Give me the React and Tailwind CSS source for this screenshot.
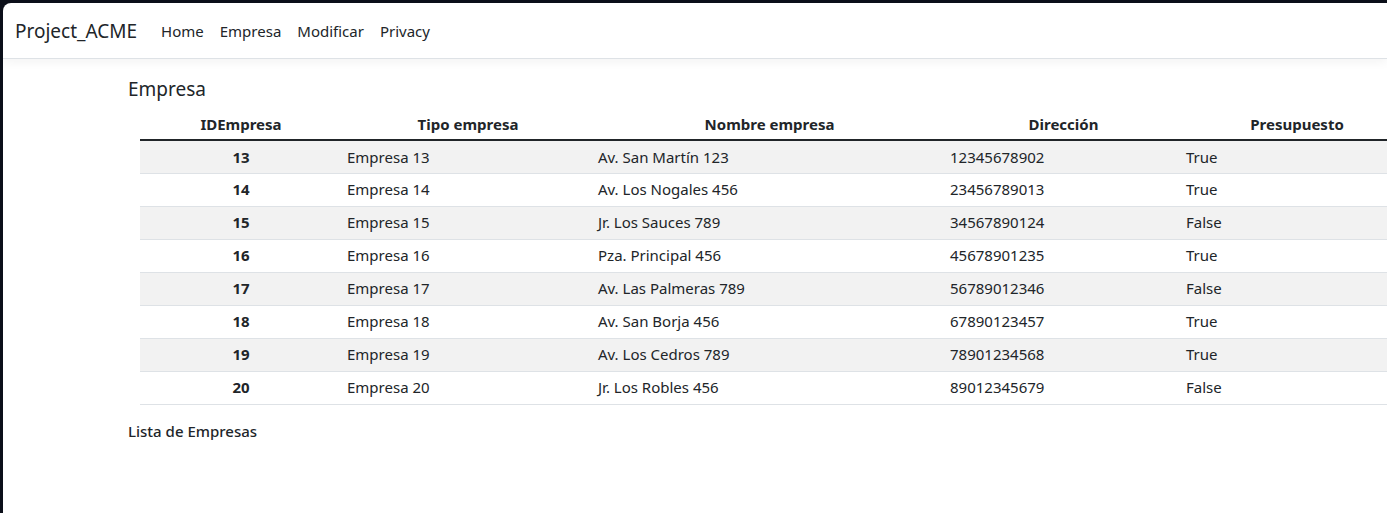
import React from 'react';

const empresas = [
  { id: 13, tipo: 'Empresa 13', nombre: 'Av. San Martín 123', direccion: '12345678902', presupuesto: 'True' },
  { id: 14, tipo: 'Empresa 14', nombre: 'Av. Los Nogales 456', direccion: '23456789013', presupuesto: 'True' },
  { id: 15, tipo: 'Empresa 15', nombre: 'Jr. Los Sauces 789', direccion: '34567890124', presupuesto: 'False' },
  { id: 16, tipo: 'Empresa 16', nombre: 'Pza. Principal 456', direccion: '45678901235', presupuesto: 'True' },
  { id: 17, tipo: 'Empresa 17', nombre: 'Av. Las Palmeras 789', direccion: '56789012346', presupuesto: 'False' },
  { id: 18, tipo: 'Empresa 18', nombre: 'Av. San Borja 456', direccion: '67890123457', presupuesto: 'True' },
  { id: 19, tipo: 'Empresa 19', nombre: 'Av. Los Cedros 789', direccion: '78901234568', presupuesto: 'True' },
  { id: 20, tipo: 'Empresa 20', nombre: 'Jr. Los Robles 456', direccion: '89012345679', presupuesto: 'False' },
];

const App = () => {
  return (
    <div className="h-[513px] bg-[#0b0f19] pt-[3px] pl-[3px] overflow-hidden font-['Noto_Sans',sans-serif] text-[#212529]">
      <div className="h-full bg-white rounded-tl-[8px] overflow-hidden">
        <nav className="h-[56px] flex items-center px-3 pt-[2px] border-b border-[#dee2e6] shadow-[0_3px_10px_rgba(0,0,0,0.05)]">
          <span className="text-[19px] mr-4">Project_ACME</span>
          <ul className="flex text-[15px]">
            <li className="px-2">Home</li>
            <li className="px-2">Empresa</li>
            <li className="px-2">Modificar</li>
            <li className="px-2">Privacy</li>
          </ul>
        </nav>

        <main className="pl-[125px] pt-[18px]">
          <h5 className="text-[19px] leading-[24px] mb-[9px]">Empresa</h5>
          <div className="pl-[12px]">
            <table className="table-fixed w-[1270px] border-collapse text-[15px]">
              <thead>
                <tr className="border-b-2 border-[#212529]">
                  <th className="w-[200px] text-center font-bold h-[30px] pl-[2px]">IDEmpresa</th>
                  <th className="w-[250px] text-center font-bold pl-[6px]">Tipo empresa</th>
                  <th className="w-[352px] text-center font-bold pl-[7px]">Nombre empresa</th>
                  <th className="w-[236px] text-center font-bold pl-[7px]">Dirección</th>
                  <th className="w-[232px] text-center font-bold pl-[6px]">Presupuesto</th>
                </tr>
              </thead>
              <tbody>
                {empresas.map((e, i) => (
                  <tr key={e.id} className={`border-b border-[#dee2e6] h-[33px] ${i % 2 === 0 ? 'bg-[#f2f2f2]' : 'bg-white'}`}>
                    <th className="text-center font-bold pl-[2px]">{e.id}</th>
                    <td className="px-2 pl-[7px]">{e.tipo}</td>
                    <td className="px-2">{e.nombre}</td>
                    <td className="px-2">{e.direccion}</td>
                    <td className="px-2">{e.presupuesto}</td>
                  </tr>
                ))}
              </tbody>
            </table>
          </div>
          <p className="mt-[15px] text-[15px] font-medium">Lista de Empresas</p>
        </main>
      </div>
    </div>
  );
};

export default App;
